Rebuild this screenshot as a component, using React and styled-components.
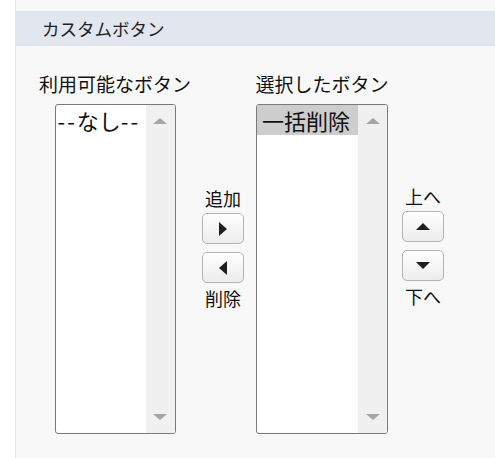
import React from "react";
import styled, { createGlobalStyle } from "styled-components";

const Global = createGlobalStyle`
  html, body { margin: 0; padding: 0; background: #ffffff; }
  body { font-family: "Noto Sans CJK JP", "Noto Sans", sans-serif; color: #111; }
`;

const Page = styled.div`
  display: flex;
  width: 495px;
  height: 458px;
  overflow: hidden;
  background: #ffffff;
`;

const Gutter = styled.div`
  width: 15px;
  flex: none;
`;

const Panel = styled.section`
  flex: 1;
  border-left: 1px solid #e6e6e6;
  background: #f8f8f8;
  padding-top: 11px;
`;

const Header = styled.h2`
  margin: 0;
  height: 35px;
  display: flex;
  align-items: center;
  padding-left: 26px;
  background: #e1e6ef;
  font-size: 17.5px;
  font-weight: 400;
  color: #222;
`;

const Body = styled.div`
  display: grid;
  grid-template-columns: 150px 66px 132px 70px;
  padding: 24px 0 0 24px;
`;

const Column = styled.div`
  display: flex;
  flex-direction: column;
  align-items: center;
`;

const Label = styled.div`
  font-size: 19px;
  line-height: 28px;
  color: #111;
  white-space: nowrap;
  margin-bottom: 6px;
`;

const ListBox = styled.div`
  position: relative;
  display: flex;
  width: ${(p) => p.$w}px;
  height: 330px;
  box-sizing: border-box;
  border: 1px solid #7a7a7a;
  border-radius: 3px;
  background: #ffffff;
  overflow: hidden;
`;

const Items = styled.div`
  flex: 1;
  display: flex;
  flex-direction: column;
`;

const Item = styled.div`
  height: 30px;
  line-height: 30px;
  padding-left: ${(p) => (p.$selected ? 5 : 2)}px;
  font-size: 22px;
  color: #111;
  white-space: nowrap;
  background: ${(p) => (p.$selected ? "#cdcdcd" : "transparent")};
`;

const Dash = styled.span`
  letter-spacing: 2px;
`;

const ScrollBar = styled.div`
  width: 29px;
  flex: none;
  background: #f0f0f0;
  display: flex;
  flex-direction: column;
  justify-content: space-between;
  align-items: center;
  padding: 13px 0 13px;
  box-sizing: border-box;
`;

const Arrow = styled.div`
  width: 0;
  height: 0;
  border-left: 7px solid transparent;
  border-right: 7px solid transparent;
  ${(p) =>
    p.$dir === "up"
      ? "border-bottom: 6px solid #a6a6a6;"
      : "border-top: 6px solid #a6a6a6;"}
`;

const ButtonGroup = styled.div`
  display: flex;
  flex-direction: column;
  align-items: center;
  margin-top: ${(p) => p.$top}px;
`;

const SmallLabel = styled.div`
  font-size: 18px;
  line-height: 22px;
  color: #111;
  white-space: nowrap;
`;

const ArrowButton = styled.button`
  width: 42px;
  height: 31px;
  margin: ${(p) => p.$m};
  padding: 0;
  border: 1px solid #b4b4b4;
  border-radius: 5px;
  background: linear-gradient(#ffffff, #ececec);
  display: flex;
  align-items: center;
  justify-content: center;
  cursor: pointer;
`;

const Tri = styled.span`
  width: 0;
  height: 0;
  ${(p) => {
    switch (p.$dir) {
      case "right":
        return "border-top: 7px solid transparent; border-bottom: 7px solid transparent; border-left: 8px solid #1e1e1e;";
      case "left":
        return "border-top: 7px solid transparent; border-bottom: 7px solid transparent; border-right: 8px solid #1e1e1e;";
      case "up":
        return "border-left: 7.5px solid transparent; border-right: 7.5px solid transparent; border-bottom: 7px solid #1e1e1e;";
      default:
        return "border-left: 7.5px solid transparent; border-right: 7.5px solid transparent; border-top: 7px solid #1e1e1e;";
    }
  }}
`;

function List({ width, children }) {
  return (
    <ListBox $w={width} role="listbox">
      <Items>{children}</Items>
      <ScrollBar>
        <Arrow $dir="up" />
        <Arrow $dir="down" />
      </ScrollBar>
    </ListBox>
  );
}

export default function App() {
  return (
    <>
      <Global />
      <Page>
        <Gutter />
        <Panel>
          <Header>カスタムボタン</Header>
          <Body>
            <Column>
              <Label>利用可能なボタン</Label>
              <List width={121}>
                <Item>
                  <Dash>--</Dash>なし<Dash>--</Dash>
                </Item>
              </List>
            </Column>
            <Column>
              <ButtonGroup $top={117}>
                <SmallLabel>追加</SmallLabel>
                <ArrowButton $m="4px 0 0" aria-label="追加">
                  <Tri $dir="right" />
                </ArrowButton>
                <ArrowButton $m="8px 0 4px" aria-label="削除">
                  <Tri $dir="left" />
                </ArrowButton>
                <SmallLabel>削除</SmallLabel>
              </ButtonGroup>
            </Column>
            <Column>
              <Label>選択したボタン</Label>
              <List width={132}>
                <Item $selected>一括削除</Item>
              </List>
            </Column>
            <Column>
              <ButtonGroup $top={115}>
                <SmallLabel>上へ</SmallLabel>
                <ArrowButton $m="4px 0 0" aria-label="上へ">
                  <Tri $dir="up" />
                </ArrowButton>
                <ArrowButton $m="8px 0 4px" aria-label="下へ">
                  <Tri $dir="down" />
                </ArrowButton>
                <SmallLabel>下へ</SmallLabel>
              </ButtonGroup>
            </Column>
          </Body>
        </Panel>
      </Page>
    </>
  );
}
